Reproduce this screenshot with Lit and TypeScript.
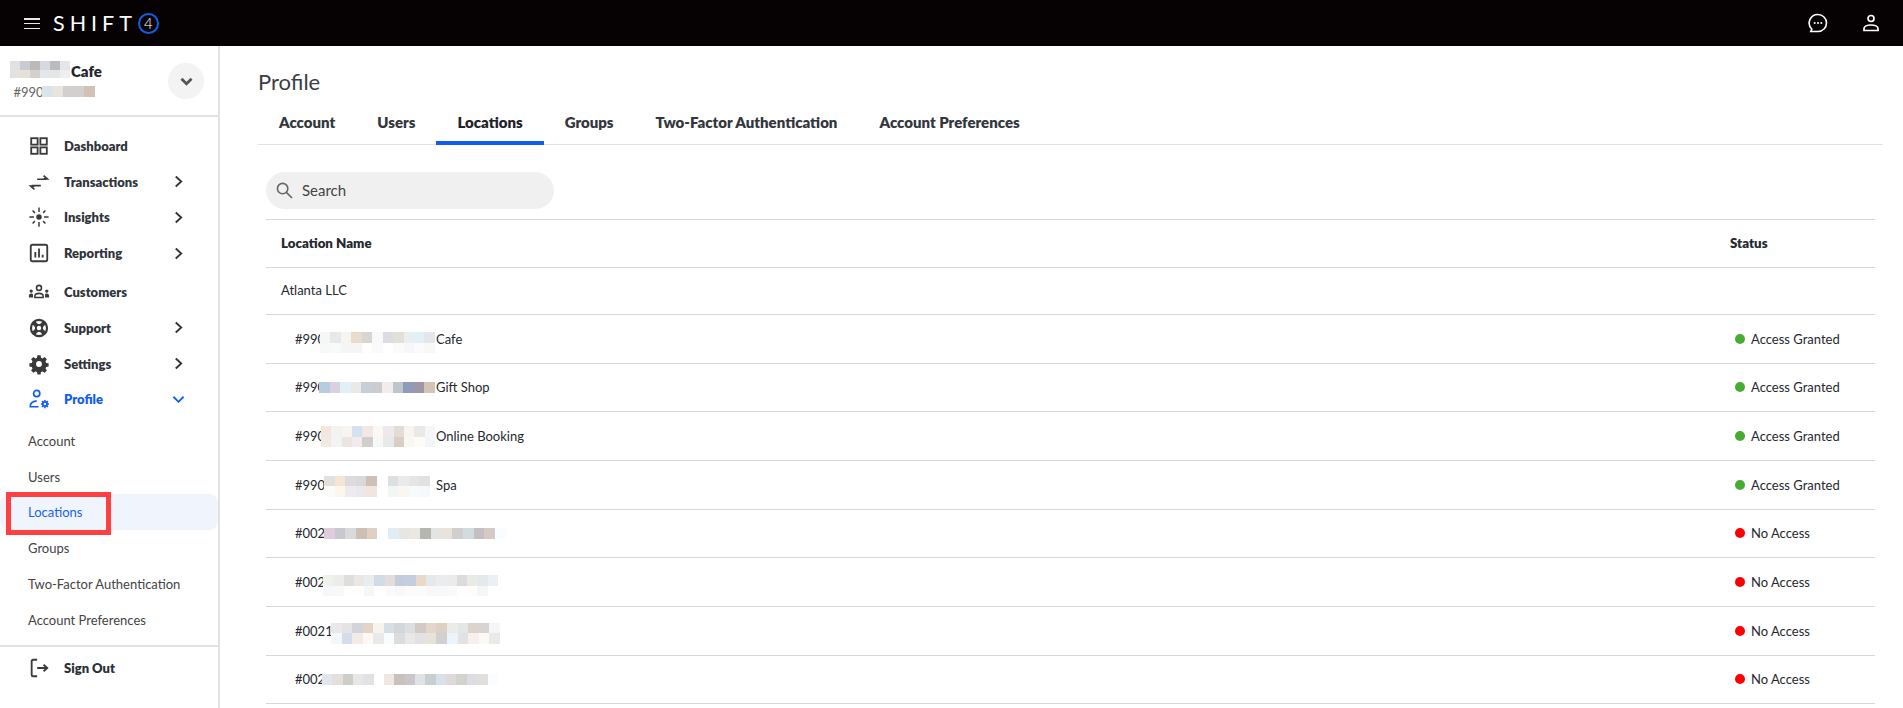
import { LitElement, html, css, svg } from "lit";
import { customElement } from "lit/decorators.js";

const i = (body: unknown) => html`<svg class="ico" viewBox="0 0 24 24" fill="none" stroke="currentColor" stroke-width="2">${body}</svg>`;
const chevR = html`<svg class="chev" viewBox="0 0 12 14" fill="none" stroke="currentColor" stroke-width="2"><path d="M3 1.5 9 7l-6 5.5"/></svg>`;
const chevD = html`<svg class="chevd" viewBox="0 0 14 12" fill="none" stroke="currentColor" stroke-width="2"><path d="M1.5 3 7 8.5 12.5 3"/></svg>`;

const icons: Record<string, unknown> = {
  dash: i(svg`<rect x="3.5" y="3.5" width="7" height="7" /><rect x="13.5" y="3.5" width="7" height="7" /><rect x="3.5" y="13.5" width="7" height="7" /><rect x="13.5" y="13.5" width="7" height="7" />`),
  tx: i(svg`<path d="M10 9h10M17 5l4 3.5-4 0M4 16h10M7 20l-4-3.5 4 0" stroke-width="1.9"/>`),
  ins: i(svg`<circle cx="12" cy="12" r="3" fill="currentColor" stroke="none"/><path d="M12 1.5v5M12 17.5v5M1.5 12h5M17.5 12h5M5 5l2.5 2.5M16.500 16.500 19 19M5 19l2.500-2.500M16.500 7.500 19 5" stroke-width="1.600"/>`),
  rep: i(svg`<rect x="3" y="3" width="18" height="18" rx="2"/><path d="M8 17v-6M12 17V7M16 17v-3"/>`),
  cust: i(svg`<circle cx="12" cy="7.500" r="2.700" stroke-width="1.700"/><path d="M7.500 18v-1.500c0-2 2-3 4.500-3s4.500 1 4.500 3V18z" stroke-width="1.700"/><circle cx="3.500" cy="11" r="1.800" fill="currentColor" stroke="none"/><circle cx="20.500" cy="11" r="1.800" fill="currentColor" stroke="none"/><path d="M1 18v-2c0-1.500 1-2.500 2.500-2.500S5.500 14 5.500 16v2zM23 18v-2c0-1.500-1-2.500-2.500-2.500S18.500 14 18.500 16v2z" fill="currentColor" stroke="none"/>`),
  sup: i(svg`<circle cx="12" cy="12" r="8.800" stroke-width="2.400"/><circle cx="12" cy="12" r="3.400" stroke-width="2"/><path d="M6 6l3.500 3.500M18 6l-3.500 3.500M6 18l3.500-3.500M18 18l-3.500-3.500" stroke-width="4.500"/>`),
  set: html`<svg class="ico" viewBox="0 0 24 24" fill="currentColor"><path fill-rule="evenodd" d="M10.300 2.500h3.400l.5 2.700 1.700.7 2.300-1.500 2.400 2.400-1.500 2.300.7 1.700 2.700.5v3.400l-2.700.5-.7 1.700 1.500 2.300-2.400 2.400-2.300-1.500-1.700.7-.5 2.700h-3.400l-.5-2.700-1.700-.7-2.300 1.500-2.400-2.400 1.500-2.300-.7-1.700-2.700-.5v-3.400l2.700-.5.7-1.700-1.500-2.300 2.400-2.400 2.300 1.500 1.700-.7zM12 8.800a3.200 3.200 0 1 0 0 6.400 3.200 3.200 0 0 0 0-6.400z"/></svg>`,
  prof: i(svg`<circle cx="9.500" cy="6" r="3.400" stroke-width="1.800"/><path d="M11.500 20.500H2.500v-1c0-3 3-5 7-5.500" stroke-width="1.800"/><circle cx="18.500" cy="17.500" r="2.300" stroke-width="1.900"/><path d="M18.500 13v2M18.500 20v2M14 17.500h2M21 17.500h2M15.300 14.300l1.400 1.400M21.700 14.300l-1.400 1.400M15.300 20.700l1.400-1.400M21.700 20.700l-1.400-1.400" stroke-width="1.700"/>`),
  out: i(svg`<path d="M10 3H5.500A1.500 1.500 0 0 0 4 4.500v15A1.500 1.500 0 0 0 5.500 21H10M10 12h11M17 8.500l4 3.500-4 3.500"/>`),
};

type Blur = { left: number; top: number; w: number; h: number; rows: string[][] };
const parse = (s: string) => s.split(" ").map((c) => (c === "-" ? "transparent" : "#" + c));
const blurOf = (b: Blur) => html`<div class="blur" style="left:${b.left}px;top:${b.top}px;grid-template-columns:repeat(${b.rows[0].length},${b.w}px);grid-auto-rows:${b.h}px">
  ${b.rows.flat().map((c) => html`<i style="background:${c}"></i>`)}
</div>`;

const rows = [
  { id: "#990", name: "Cafe", ok: true, top: 17, left: 25, w: 10.45, rows: ["f5f7f5 e6e9e8 f6f5f2 e9dccb d9d6d1 f8f9f8 dddce2 e3dfd9 e9eff1 e1eff7 e4e7ea", "f7f8f8 f8f9f9 f6f5f5 f6f5f4 fffefc f9faf9 ffffff fbfbfa f6f7f8 fafbfc f8f8f8"] },
  { id: "#990", name: "Gift Shop", ok: true, top: 18, left: 24, w: 10.55, rows: ["b5cde0 dbd0de e1eff7 e9eae6 c5cfd7 cbcbd1 f4ecec bcc6cc 8d9db9 9f97a8 d4c4b6"] },
  { id: "#990", name: "Online Booking", ok: true, top: 14, left: 26, w: 10.36, rows: ["f2e6df f3f3f2 f7f4f1 d5e1f1 f1e8e7 faf8f5 efe9ee e2dcd8 f6f5f0 ebe9e5 f6f6f6", "f3e9e2 f3f3f2 ede3e0 f3eaeb d2cccd f6f8f8 e8e9e9 d9cdc6 f8f8f0 fdfcf6 f3f6f9"] },
  { id: "#990", name: "Spa", ok: true, top: 15, left: 29, w: 10.6, rows: ["e0e0de f5e6d3 dcdce0 dad9d8 cdc0b8 - dfdee3 eae9ec e5e6e3 e1e2e0", "fbfcf9 fdf6ec efeaf0 eae8ec f1e6de - f2f6f5 fbf6f0 f6fafa f3f9fc"] },
  { id: "#002", name: "", ok: false, top: 18, left: 29, w: 10.7, rows: ["dfcddd c9c8d0 d9dadc cfbfb2 dfd0c1 - e1edf4 e6e7e2 ebe8e2 b6b6b0 e4e5e2 eae3d9 d2cecd d2dbe0 c3bfc4 d5c9c4 fafdff"] },
  { id: "#002", name: "", ok: false, top: 17, left: 28, w: 10.3, rows: ["eef3ec ececea dededd ebe8e3 e8edee d0dde9 e3dbdc c4cddf c3cfdf e8d9c8 e6e9ec ebecee ebebed dddbdc e9ebe5 e6e9e9 eaf0f6", "f6f7f9 f8f8f8 fefefc fefefc f6f6f6 ffffff fbfafa faf8f6 fcfbfa fbfbf9 f8f8f8 f8f8fa fafafa fefefc fefdfc f6f6f6 ffffff"] },
  { id: "#0021", name: "", ok: false, top: 16, left: 36, w: 10.56, rows: ["e9e8e6 e4e4e4 d3d3d9 e2d5c6 f7f3ed d7dfe5 d1d7db dddedf d3cac4 e2d7cb dcd1c2 ecebe7 e2e8e7 dcd3cc d6d5d3 f5f6f5", "f4f8fc d6dcec f4ebe6 fff9f2 e9e9e9 f7fcff dcdcdc e8e8e9 e4e1e2 e8e3d8 d0d0d0 ebf3fb e3e2e3 f6f1ee fcf8f2 eaeaea"] },
  { id: "#002", name: "", ok: false, top: 18, left: 27, w: 10.35, rows: ["dfe6ee e4dfda cfcdc9 e7e7e5 e2e2e4 - efe7e0 c9c1bb cbc6ca e0e3e5 c8cfd0 d8e1eb dedad9 d2d3cd dddce4 e2dedb fafdff"] },
];

@customElement("app-root")
export class AppRoot extends LitElement {
  static styles = css`
    :host { display: block; height: 100vh; overflow: hidden; font-family: "Lato", "Noto Sans", sans-serif; color: #2b2f36; background: #fff; }
    * { box-sizing: border-box; }
    .top { height: 46px; background: #060203; color: #fff; display: flex; align-items: center; padding: 0 23px 0 24px; }
    .burger { width: 16px; height: 11px; margin-top: 1px; display: flex; flex-direction: column; justify-content: space-between; margin-right: 13px; }
    .burger i { display: block; height: 1.500px; background: #e8e8e8; }
    .word { font-size: 21.500px; font-weight: 400; letter-spacing: 5px; line-height: 1; margin-top: 1px; margin-right: 1px; }
    .four { width: 21px; height: 21px; border: 2px solid #0f5fe8; border-radius: 50%; display: flex; align-items: center; justify-content: center; font-size: 15px; font-weight: 300; margin-top: 1px; line-height: 1; }
    .top-r { margin-left: auto; display: flex; align-items: center; gap: 34px; }
    .top-r svg { display: block; }
    .body { display: flex; height: calc(100% - 46px); }
    .side { width: 220px; flex: none; border-right: 2px solid #e2e2e2; position: relative; }
    .acct { height: 71px; border-bottom: 2px solid #e2e2e2; position: relative; }
    .acct-name { font-size: 15px; font-weight: 800; position: absolute; left: 71px; top: 16px; color: #23262c; }
    .acct-id { font-size: 13px; color: #666; position: absolute; left: 13.500px; top: 38px; }
    .circle { position: absolute; left: 168px; top: 17px; width: 36px; height: 36px; border-radius: 50%; background: #f3f3f3; color: #555; display: flex; align-items: center; justify-content: center; }
    .circle .chevd { position: static; width: 13px; height: 11px; stroke-width: 3; color: #555; }
    .blur { position: absolute; display: grid; }
    .blur i { display: block; }
    .nav { padding-top: 11px; display: flex; flex-direction: column; }
    .item { height: 35.800px; display: flex; align-items: center; padding-left: 28px; font-size: 13px; font-weight: 800; color: #30343b; }
    .item.gap { margin-top: 3px; }
    .item.on { color: #0f5ef0; margin-bottom: 5.500px; }
    .ico { width: 22px; height: 22px; margin-right: 14px; flex: none; color: #3a3a3a; }
    .on .ico { color: #0f5ef0; }
    .chev { width: 11px; height: 13px; position: absolute; left: 173px; color: #333; }
    .chevd { width: 13px; height: 11px; position: absolute; left: 172px; color: #0f5ef0; }
    .sub { height: 35.800px; display: flex; align-items: center; padding-left: 28px; font-size: 13px; color: #444; }
    .sub.cur { color: #1a62ee; background: #eff4fd; border-radius: 9px; }
    .mark { position: absolute; left: 6px; top: 446px; width: 105px; height: 43px; border: 5px solid #ff4040; pointer-events: none; }
    .sep { border-top: 2px solid #e2e2e2; margin-top: 7px; padding-top: 3px; }
    .sep .item { height: 37px; color: #2b2f36; }
    .main { flex: 1; min-width: 0; padding: 22px 20px 0 38px; }
    h1 { margin: 0; font-size: 22px; font-weight: 400; line-height: 28px; color: #3a3e45; }
    .tabs { display: flex; margin-top: 3px; height: 46px; border-bottom: 1px solid #e2e2e2; }
    .tab { padding: 1px 21px 0; display: flex; align-items: center; height: 100%; font-size: 15px; font-weight: 800; color: #33373d; }
    .tab.cur { color: #1f2228; border-bottom: 4px solid #0f5ef0; margin-bottom: -1px; height: 46px; padding-top: 4px; }
    .search { margin: 27px 0 0 8px; width: 288px; height: 37px; background: #f0f0f0; border-radius: 19px; display: flex; align-items: center; padding: 0 0 1px 10px; font-size: 15px; color: #444; gap: 9px; }
    .search svg { width: 17px; height: 17px; color: #666; flex: none; }
    .table { margin: 10px 8px 0 8px; border-top: 1px solid #d8d8d8; }
    .row { display: grid; grid-template-columns: 1fr 145px; align-items: center; border-bottom: 1px solid #d8d8d8; height: 48.670px; font-size: 13px; color: #25282e; position: relative; }
    .row.head { height: 48px; font-weight: 800; font-size: 13.300px; padding-bottom: 2px; }
    .row.grp { height: 47px; padding-bottom: 2px; }
    .lead { padding-left: 15px; }
    .loc { padding-left: 29px; display: flex; align-items: center; position: relative; height: 100%; }
    .idbox { width: 141px; flex: none; position: relative; height: 100%; display: flex; align-items: center; }
    .status { display: flex; align-items: center; padding-left: 5px; gap: 6px; }
    .dot { width: 10px; height: 10px; border-radius: 50%; flex: none; }
    .dot.ok { background: #46ac33; }
    .dot.no { background: #ff0000; }
  `;

  render() {
    return html`
      <div class="top">
        <div class="burger"><i></i><i></i><i></i></div>
        <div class="word">SHIFT</div>
        <div class="four">4</div>
        <div class="top-r">
          <svg width="20" height="20" viewBox="0 0 20 20" fill="none" stroke="#fff" stroke-width="1.600"><path d="M10 1.500a8.500 8.500 0 0 1 0 17H2.800l1-2.400A8.500 8.500 0 0 1 10 1.500z"/><circle cx="6.700" cy="10" r="1" fill="#fff" stroke="none"/><circle cx="10" cy="10" r="1" fill="#fff" stroke="none"/><circle cx="13.300" cy="10" r="1" fill="#fff" stroke="none"/></svg>
          <svg width="18" height="18" viewBox="0 0 18 18" fill="none" stroke="#fff" stroke-width="1.700"><circle cx="9" cy="4.500" r="3"/><path d="M2 16.500v-2c0-2 3-3.500 7-3.500s7 1.500 7 3.500v2z"/></svg>
        </div>
      </div>
      <div class="body">
        <aside class="side">
          <div class="acct">
            ${blurOf({ left: 10, top: 15, w: 10, h: 8.500, rows: [parse("e0e2e2 c9cbd3 bcbab8 d5dae2 babbc0 e4e6ea"), parse("e2e2e0 e4e1d9 d4d0cb e4e7ea e5e6e3 eeeff0")] })}
            <div class="acct-name">Cafe</div>
            <div class="acct-id">#990</div>
            ${blurOf({ left: 42, top: 40, w: 10.600, h: 11, rows: [parse("d8e3ea e8e5dd d2cfce d2cfce d0c3b3")] })}
            <div class="circle">${chevD}</div>
          </div>
          <nav class="nav">
            <div class="item">${icons.dash}Dashboard</div>
            <div class="item">${icons.tx}Transactions${chevR}</div>
            <div class="item">${icons.ins}Insights${chevR}</div>
            <div class="item">${icons.rep}Reporting${chevR}</div>
            <div class="item gap">${icons.cust}Customers</div>
            <div class="item">${icons.sup}Support${chevR}</div>
            <div class="item">${icons.set}Settings${chevR}</div>
            <div class="item on">${icons.prof}Profile${chevD}</div>
            <div class="sub">Account</div>
            <div class="sub">Users</div>
            <div class="sub cur">Locations</div>
            <div class="sub">Groups</div>
            <div class="sub">Two-Factor Authentication</div>
            <div class="sub">Account Preferences</div>
            <div class="sep"><div class="item">${icons.out}Sign Out</div></div>
          </nav>
          <div class="mark"></div>
        </aside>
        <main class="main">
          <h1>Profile</h1>
          <div class="tabs">
            <div class="tab">Account</div>
            <div class="tab">Users</div>
            <div class="tab cur">Locations</div>
            <div class="tab">Groups</div>
            <div class="tab">Two-Factor Authentication</div>
            <div class="tab">Account Preferences</div>
          </div>
          <div class="search">
            <svg viewBox="0 0 18 18" fill="none" stroke="currentColor" stroke-width="1.700"><circle cx="7" cy="7" r="5.500"/><path d="m11 11 6 6"/></svg>
            Search
          </div>
          <div class="table">
            <div class="row head"><div class="lead">Location Name</div><div>Status</div></div>
            <div class="row grp"><div class="lead">Atlanta LLC</div><div></div></div>
            ${rows.map((r) => html`
              <div class="row">
                <div class="loc">
                  <div class="idbox">${r.id}${blurOf({ left: r.left, top: r.top, w: r.w, h: r.rows.length > 1 ? 10.500 : 11, rows: r.rows.map(parse) })}</div>
                  ${r.name}
                </div>
                <div class="status"><span class="dot ${r.ok ? "ok" : "no"}"></span>${r.ok ? "Access Granted" : "No Access"}</div>
              </div>`)}
          </div>
        </main>
      </div>
    `;
  }
}
